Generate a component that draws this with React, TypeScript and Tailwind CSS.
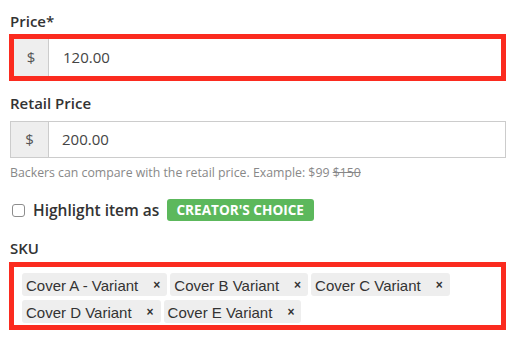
import React from "react";

const tags1 = ["Cover A - Variant", "Cover B Variant", "Cover C Variant"];
const tags2 = ["Cover D Variant", "Cover E Variant"];

function Tag({ label }: { label: string }) {
  return (
    <div className="flex h-[23px] items-start rounded-[3px] bg-[#eeeeee] pl-[4px] pr-[7px] pt-[2px] text-[15px] leading-[21px] text-[#333] font-['Liberation_Sans',Arial,sans-serif]">
      <span>{label}</span>
      <span className="ml-[15px] text-[12px] font-bold leading-[21px] text-[#333]">×</span>
    </div>
  );
}

export default function App() {
  return (
    <div className="h-[347px] w-[530px] bg-white pl-[10px] pt-[11px] font-['Open_Sans',sans-serif] text-[#333]">
      <div className="text-[15px] font-semibold leading-[20px]">Price*</div>
      <div className="mt-[3px] -ml-px flex h-[47px] w-[497px] border-[5px] border-[#fb2b1f]">
        <div className="flex w-[35px] items-center justify-center border-r border-[#cccccc] bg-[#eeeeee] text-[15px] text-[#555]">
          $
        </div>
        <div className="flex flex-1 items-center pl-[14px] text-[15px] text-[#444]">120.00</div>
      </div>

      <div className="mt-[12px] text-[15px] font-semibold leading-[20px]">Retail Price</div>
      <div className="mt-[8px] flex h-[37px] w-[496px] border border-[#cccccc]">
        <div className="flex w-[38px] items-center justify-center border-r border-[#cccccc] bg-[#eeeeee] text-[15px] text-[#555]">
          $
        </div>
        <div className="flex flex-1 items-center pl-[13px] text-[15px] text-[#444]">200.00</div>
      </div>
      <div className="mt-[6px] text-[12.3px] leading-[17px] text-[#888]">
        Backers can compare with the retail price. Example: $99 <span className="line-through">$150</span>
      </div>

      <div className="mt-[18px] flex h-[22px] items-center">
        <div className="ml-[2px] h-[13px] w-[13px] rounded-[3px] border border-[#8d8d8d] bg-white" />
        <span className="ml-[8px] text-[15.5px] font-semibold leading-[22px] text-[#333]">Highlight item as</span>
        <span className="ml-[8px] flex h-[22px] items-center rounded-[3px] bg-[#5cb85c] pl-[9px] pr-[10px] text-[13.6px] font-bold text-white">
          CREATOR'S CHOICE
        </span>
      </div>

      <div className="mt-[17px] text-[15px] font-semibold leading-[20px]">SKU</div>
      <div className="mt-[4px] -ml-px h-[68px] w-[497px] border-[5px] border-[#fb2b1f] pl-[8px] pt-[6px]">
        <div className="flex flex-col gap-[4px]">
          <div className="flex gap-[3px]">
            {tags1.map((t) => (
              <Tag key={t} label={t} />
            ))}
          </div>
          <div className="flex gap-[3px]">
            {tags2.map((t) => (
              <Tag key={t} label={t} />
            ))}
          </div>
        </div>
      </div>
    </div>
  );
}
